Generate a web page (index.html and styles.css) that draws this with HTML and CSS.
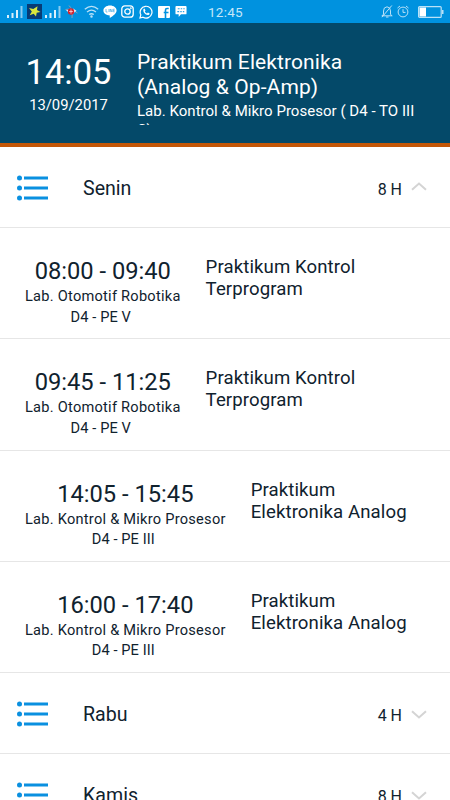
FILE: index.html
```html
<!DOCTYPE html>
<html lang="id">
<head>
    <meta charset="UTF-8">
    <title>Jadwal</title>
    <link rel="stylesheet" href="styles.css">
</head>

<body>
<svg class="defs" width="0" height="0">
    <symbol id="signal" viewBox="0 0 16 14">
        <path d="M0 10h2v3H0zM4.500 8h2v5h-2zM9 5h2v8H9z" fill="#d9effb"/>
        <path d="M13.500 1h2v12h-2z" fill="#8accf1"/>
    </symbol>
    <symbol id="list" viewBox="0 0 32 26">
        <path d="M7 1.500h24v3H7zM7 11.500h24v3H7zM7 21.500h24v3H7z"/>
        <circle cx="2.500" cy="3" r="2.500"/>
        <circle cx="2.500" cy="13" r="2.500"/>
        <circle cx="2.500" cy="23" r="2.500"/>
    </symbol>
</svg>

<div class="status">
    <div class="icons">
        <svg width="16" height="14"><use href="#signal"/></svg>
        <svg class="star" width="15" height="15" viewBox="0 0 15 15">
            <path d="M0 0h15v15H0z" fill="#073b75"/>
            <path d="M2 4l4.300 1L10.500 2.300 10 6l3.500 2-3.800.8-.7 3.700-2.300-2.700-4 1.500L4.800 7.500z" fill="#d9e63d"/>
        </svg>
        <svg class="signal2" width="16" height="14"><use href="#signal"/></svg>
        <svg class="orbit" width="15" height="15" viewBox="0 0 15 15">
            <path d="M1.500 5.500Q7 4 13.500 9M5 1.500Q9 5 8 14" fill="none" stroke="#8d9db5"/>
            <path d="M2 6h3.500v3.500zM9 4.500l3.500 2.300L9 9.500z" fill="#e8f3fa"/>
            <circle cx="7" cy="7.500" r="3.200" fill="#d32630"/>
            <path d="M7 5.500v4M5.200 7.500h3.600" stroke="#f4c9cc" stroke-width=".9"/>
        </svg>
        <svg class="wifi" width="15" height="13" viewBox="0 0 15 13" fill="none" stroke="#b9e1f7" stroke-width="1.300">
            <path d="M.8 4.200q6.700-5.500 13.400 0M3 7q4.500-3.600 9 0M5.200 9.600q2.300-1.700 4.600 0"/>
            <circle cx="7.500" cy="11.500" r=".6"/>
        </svg>
        <svg class="line" width="14" height="13" viewBox="0 0 14 13">
            <path d="M7 .5c3.700 0 6.600 2.200 6.600 5 0 3-3.300 5.200-6.400 7.200-.6.300-.5-.4-.4-2.200C3 10.400.4 8.300.4 5.500S3.300.5 7 .5z" fill="#fff"/>
            <path d="M3 4v3h1.500M6 4v3M7.200 7V4l1.800 3V4M11.700 4.200h-1.400v2.600h1.400M10.300 5.500h1.200" fill="none" stroke="#57b4e6" stroke-width=".8"/>
        </svg>
        <svg class="insta" width="13" height="13" viewBox="0 0 13 13" fill="none" stroke="#fff" stroke-width="1.300">
            <rect x=".8" y=".8" width="11.400" height="11.400" rx="3"/>
            <circle cx="6.500" cy="6.500" r="2.700"/>
            <circle cx="9.800" cy="3.200" r=".3"/>
        </svg>
        <svg class="wa" width="14" height="14" viewBox="0 0 14 14">
            <path d="M1 13l.8-3.200A5.900 5.900 0 1 1 4 12.200z" fill="none" stroke="#fff" stroke-width="1.200"/>
            <path d="M4.500 4l1-.5 1 2-.7.9q.8 1.500 2.200 2l.9-.9 1.800 1q-.3 1.700-1.800 1.600C6.200 9.800 3.600 7 4.500 4z" fill="#fff"/>
        </svg>
        <svg class="fb" width="12" height="12" viewBox="0 0 12 12">
            <rect width="12" height="12" rx="1" fill="#fff"/>
            <path d="M7.500 12V4q0-1.500 1.500-1.500h1.700M5.700 6.500h4.800" fill="none" stroke="#0092df" stroke-width="1.600"/>
        </svg>
        <svg class="bbm" width="12" height="12" viewBox="0 0 12 13">
            <path d="M1 0h10q1 0 1 1v7q0 1-1 1H6l-2.500 3V9H1Q0 9 0 8V1q0-1 1-1z" fill="#fff"/>
            <path d="M2.500 3h2M5.700 3h1.600M8.500 3h1.500M2 6h2M5.200 6h1.600M8 6h1.500" stroke="#2ba2e2" stroke-width="1.300"/>
        </svg>
    </div>
    <span class="clock">12:45</span>
    <div class="icons">
        <svg width="12" height="13" viewBox="0 0 12 13" fill="none" stroke="#b9e1f7">
            <path d="M2.500 9.500V6Q2.500 2 6 1.800 9.500 2 9.500 6v3.500l1.700 1.300H.8zM5 12h2.500M10.800.5L1 12.200"/>
        </svg>
        <svg class="alarm" width="12" height="13" viewBox="0 0 12 13" fill="none" stroke="#b9e1f7">
            <circle cx="6" cy="7" r="4.900"/>
            <path d="M6 4.200v3.200h2.500M.5 3L3 1M11.500 3L9 1"/>
        </svg>
        <svg class="battery" width="26" height="12" viewBox="0 0 26 12">
            <rect x=".6" y=".6" width="22.600" height="10.800" rx="1" fill="none" stroke="#b9e1f7" stroke-width="1.200"/>
            <path d="M1.500 1.500H8v9H1.500z" fill="#fff"/>
            <path d="M24 4h1.500v4H24z" fill="#b9e1f7"/>
        </svg>
    </div>
</div>

<div class="header">
    <div class="now">
        <p class="hour">14:05</p>
        <p class="date">13/09/2017</p>
    </div>
    <div class="next">
        <p class="title">Praktikum Elektronika (Analog &amp; Op-Amp)</p>
        <p class="place">Lab. Kontrol &amp; Mikro Prosesor ( D4 - TO III C)</p>
    </div>
</div>

<div class="day">
    <svg class="list" width="32" height="26"><use href="#list"/></svg>
    <span class="name">Senin</span>
    <span class="total">8 H</span>
    <svg class="arrow" width="16" height="9" viewBox="0 0 16 9"><path d="M1 7.800L8 1.500l7 6.300"/></svg>
</div>

<div class="lesson">
    <div class="info">
        <p class="time">08:00 - 09:40</p>
        <p class="room">Lab. Otomotif Robotika</p>
        <p class="group">D4 - PE V</p>
    </div>
    <p class="subject">Praktikum Kontrol<br>Terprogram</p>
</div>
<div class="lesson">
    <div class="info">
        <p class="time">09:45 - 11:25</p>
        <p class="room">Lab. Otomotif Robotika</p>
        <p class="group">D4 - PE V</p>
    </div>
    <p class="subject">Praktikum Kontrol<br>Terprogram</p>
</div>
<div class="lesson">
    <div class="info">
        <p class="time">14:05 - 15:45</p>
        <p class="room">Lab. Kontrol &amp; Mikro Prosesor</p>
        <p class="group">D4 - PE III</p>
    </div>
    <p class="subject">Praktikum<br>Elektronika Analog</p>
</div>
<div class="lesson">
    <div class="info">
        <p class="time">16:00 - 17:40</p>
        <p class="room">Lab. Kontrol &amp; Mikro Prosesor</p>
        <p class="group">D4 - PE III</p>
    </div>
    <p class="subject">Praktikum<br>Elektronika Analog</p>
</div>

<div class="day">
    <svg class="list" width="32" height="26"><use href="#list"/></svg>
    <span class="name">Rabu</span>
    <span class="total">4 H</span>
    <svg class="arrow down" width="16" height="9" viewBox="0 0 16 9"><path d="M1 1.200l7 6.300 7-6.300"/></svg>
</div>
<div class="day">
    <svg class="list" width="32" height="26"><use href="#list"/></svg>
    <span class="name">Kamis</span>
    <span class="total">8 H</span>
    <svg class="arrow down" width="16" height="9" viewBox="0 0 16 9"><path d="M1 1.200l7 6.300 7-6.300"/></svg>
</div>
</body>
</html>
```
FILE: styles.css
```css
*{
    padding: 0;
    margin: 0;
    box-sizing: border-box;
}
html,body{
    height: 800px;
    overflow: hidden;
}
body{
    width: 450px;
    background-color: #fff;
    color: #10222e;
    font-family: Roboto, sans-serif;
}
svg{
    display: block;
    flex: none;
}
.defs{
    position: absolute;
}
.status{
    height: 23px;
    display: flex;
    align-items: center;
    padding: 0 6px 0 7px;
    background-color: #0092df;
}
.icons{
    display: flex;
    align-items: center;
}
.icons .star{
    margin-left: 4px;
}
.icons .signal2{
    margin-left: 3px;
}
.icons .orbit{
    margin-left: 3px;
}
.icons .wifi{
    margin-left: 5px;
}
.icons .line{
    margin-left: 4px;
}
.icons .insta{
    margin-left: 4px;
}
.icons .wa{
    margin-left: 5px;
}
.icons .fb{
    margin-left: 5px;
}
.icons .bbm{
    margin-left: 5px;
}
.icons .alarm{
    margin-left: 4px;
}
.icons .battery{
    margin-left: 9px;
}
.clock{
    color: #c5e7f9;
    font-size: 13.5px;
    letter-spacing: .3px;
    margin-right: 138px;
    margin-left: auto;
    padding-top: 1px;
}
.header{
    height: 124px;
    display: flex;
    padding: 27px 20px 0 25px;
    background-color: #044969;
    border-bottom: 4px solid #c45708;
    color: #fff;
}
.header .now{
    width: 87px;
    text-align: center;
    white-space: nowrap;
}
.header .hour{
    font-size: 34.5px;
    line-height: 44px;
}
.header .date{
    font-size: 14.8px;
    line-height: 22px;
}
.header .next{
    width: 290px;
    height: 75px;
    margin-left: 25px;
    overflow: hidden;
}
.header .title{
    width: 230px;
    font-size: 21px;
    letter-spacing: .1px;
    line-height: 25px;
}
.header .place{
    font-size: 15px;
    letter-spacing: .03px;
    line-height: 19px;
    padding-top: 2px;
}
.day{
    height: 81px;
    display: flex;
    align-items: center;
    padding: 1px 23px 0 17px;
    border-bottom: 1px solid #e6e6e6;
}
.day .list{
    fill: #0a90e0;
}
.day .name{
    flex: 1;
    margin-left: 34px;
    font-size: 19.6px;
    padding-top: 1px;
}
.day .total{
    font-size: 16px;
    padding-top: 3px;
}
.day .arrow{
    margin-left: 9px;
    margin-bottom: 2px;
    fill: none;
    stroke: #d4d4d4;
    stroke-width: 2;
}
.day .down{
    margin-top: 2px;
    margin-bottom: 0;
}
.lesson{
    height: 111.25px;
    display: flex;
    align-items: flex-start;
    padding: 28px 25px 0;
    border-bottom: 1px solid #e6e6e6;
}
.lesson .info{
    text-align: center;
    font-size: 14.6px;
    line-height: 20.5px;
    white-space: nowrap;
}
.lesson .time{
    font-size: 23.7px;
    line-height: 30px;
}
.lesson .room{
    letter-spacing: .25px;
}
.lesson .group{
    letter-spacing: .1px;
    padding-right: 4px;
}
.lesson .subject{
    margin-left: 25px;
    font-size: 18.6px;
    letter-spacing: .1px;
    line-height: 22px;
}
```
